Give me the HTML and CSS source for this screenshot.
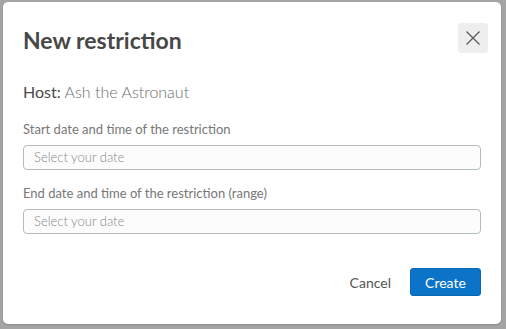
FILE: index.html
```html
<!DOCTYPE html>
<html>
<head>
<meta charset="utf-8">
<link rel="stylesheet" href="styles.css">
</head>
<body>
<div class="backdrop">
  <div class="modal">
    <div class="modal-header">
      <h1 class="title">New restriction</h1>
      <button class="close" aria-label="Close">
        <svg width="16" height="16" viewBox="0 0 16 16"><path d="M1.5 1.5 L14.5 14.5 M14.5 1.5 L1.5 14.5" stroke="#5a5a5a" stroke-width="1.3" fill="none"/></svg>
      </button>
    </div>
    <div class="modal-body">
      <p class="host"><span class="host-key">Host:</span> Ash the Astronaut</p>
      <label class="field-label">Start date and time of the restriction</label>
      <div class="input">Select your date</div>
      <label class="field-label">End date and time of the restriction (range)</label>
      <div class="input">Select your date</div>
    </div>
    <div class="modal-footer">
      <button class="btn-cancel">Cancel</button>
      <button class="btn-create">Create</button>
    </div>
  </div>
</div>
</body>
</html>
```
FILE: styles.css
```css
html, body {
  margin: 0;
  padding: 0;
  background: #a4a4a4;
  font-family: Lato, "Open Sans", sans-serif;
}
.backdrop {
  padding: 2px 0 0 3px;
  height: 329px;
  box-sizing: border-box;
}
.modal {
  width: 498px;
  height: 322px;
  background: #fff;
  border-radius: 5px;
  box-sizing: border-box;
  padding: 0 20px;
  display: flex;
  flex-direction: column;
  box-shadow: 0 1px 2px rgba(0,0,0,0.15);
}
.modal-header {
  display: flex;
  justify-content: space-between;
  align-items: flex-start;
  padding-top: 21px;
  margin-right: -7px;
}
.title {
  margin: 2px 0 0 0;
  font-size: 23px;
  line-height: 30px;
  font-weight: 700;
  color: #474747;
}
.close {
  width: 30px;
  height: 30px;
  border: none;
  border-radius: 3px;
  background: #eeeeee;
  padding: 0;
  display: flex;
  align-items: center;
  justify-content: center;
  cursor: pointer;
}
.modal-body {
  display: flex;
  flex-direction: column;
  padding-top: 27px;
}
.host {
  margin: 0;
  font-size: 16px;
  font-weight: 300;
  line-height: 20px;
  color: #6e6e6e;
}
.host-key {
  font-weight: 400;
  color: #4a4a4a;
}
.field-label {
  font-size: 13px;
  line-height: 16px;
  color: #777;
  margin-top: 19px;
  margin-bottom: 8px;
}
.input + .field-label {
  margin-top: 15px;
}
.input {
  height: 25px;
  box-sizing: border-box;
  border: 1px solid #b3bcc2;
  border-radius: 4px;
  background: #fcfcfc;
  padding: 0 10px;
  font-size: 13px;
  font-weight: 300;
  line-height: 23px;
  color: #8a8a8a;
}
.modal-footer {
  display: flex;
  justify-content: flex-end;
  align-items: center;
  gap: 19px;
  margin-top: 34px;
}
.btn-cancel {
  border: none;
  background: none;
  padding: 0;
  font-family: inherit;
  font-size: 14px;
  color: #555;
  cursor: pointer;
}
.btn-create {
  width: 71px;
  height: 28px;
  border: 1px solid #0a68b4;
  border-radius: 3px;
  background: #0b74c9;
  color: #fff;
  font-family: inherit;
  font-size: 14px;
  padding: 0;
  cursor: pointer;
}
```
